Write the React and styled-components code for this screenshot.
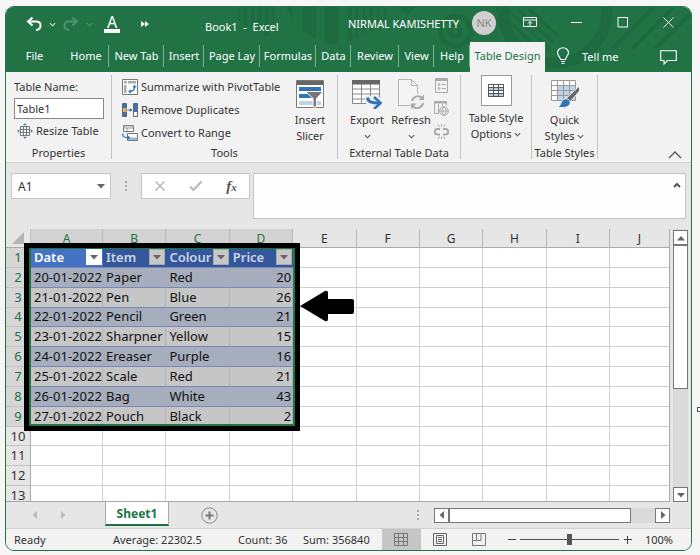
import React from 'react';
import styled, { createGlobalStyle } from 'styled-components';

const TABS = [
  { name: 'File', width: 57 },
  { name: 'Home', width: 46, line: true, pad: 2 },
  { name: 'New Tab', width: 55, line: true },
  { name: 'Insert', width: 40, line: true },
  { name: 'Page Lay', width: 56, line: true },
  { name: 'Formulas', width: 56, line: true },
  { name: 'Data', width: 35, line: true },
  { name: 'Review', width: 48, line: true },
  { name: 'View', width: 35, line: true },
  { name: 'Help', width: 36, line: true },
  { name: 'Table Design', width: 75, active: true },
];

const COLUMNS = ['A', 'B', 'C', 'D', 'E', 'F', 'G', 'H', 'I', 'J'];
const FIELDS = ['Date', 'Item', 'Colour', 'Price'];
const RECORDS = [
  ['20-01-2022', 'Paper', 'Red', 20],
  ['21-01-2022', 'Pen', 'Blue', 26],
  ['22-01-2022', 'Pencil', 'Green', 21],
  ['23-01-2022', 'Sharpner', 'Yellow', 15],
  ['24-01-2022', 'Ereaser', 'Purple', 16],
  ['25-01-2022', 'Scale', 'Red', 21],
  ['26-01-2022', 'Bag', 'White', 43],
  ['27-01-2022', 'Pouch', 'Black', 2],
];
const BLANK_ROWS = [10, 11, 12, 13];

/* ---------- icons ---------- */

const Chevron = ({ up, color = '#555', size = 7, weight = 1.3 }) => (
  <svg width={size} height={size} viewBox="0 0 8 8" fill="none" stroke={color} strokeWidth={weight}>
    <path d={up ? 'M1 6 4 3l3 3' : 'M1 2.5l3 3 3-3'} />
  </svg>
);

const Triangle = ({ dir = 'down', color = '#666', size = 8 }) => {
  const shapes = {
    down: '0,2 8,2 4,6.5',
    up: '0,6.5 8,6.5 4,2',
    left: '6,0 6,8 1.5,4',
    right: '2,0 2,8 6.5,4',
  };
  return (
    <svg width={size} height={size} viewBox="0 0 8 8">
      <polygon points={shapes[dir]} fill={color} />
    </svg>
  );
};

const UndoIcon = ({ color, flip }) => (
  <svg width="16" height="16" viewBox="0 0 16 16" fill="none" stroke={color} strokeWidth="2">
    <g transform={flip ? 'translate(16 0) scale(-1 1)' : undefined}>
      <path d="M6.5 1.5 2 5.5l4.5 4" />
      <path d="M2 5.5h8c3 0 4.5 1.7 4.5 4s-1.500 4.200-4.500 4.500" />
    </g>
  </svg>
);

const TitleArt = () => (
  <Art viewBox="0 0 686 66" preserveAspectRatio="xMinYMin slice" aria-hidden="true">
    <g fill="#1f6b41">
      <path d="M232 0h3v14h-3zM238 0h3v20h-3zM245 0h4v17h-4zM252 0h4v25h-4zM259 0h4v29h-4zM266 0h3v19h-3z" />
      <path d="M280 0h7v12zM297 0h14v32l-14-8zM319 0h14v37h-14z" />
      <path d="M343 0h3v34h-3zM350 0h3v31h-3zM357 0h3v26h-3zM364 0h3v24h-3zM371 0h3v18h-3zM378 0h3v12h-3z" />
      <path d="M393 0h18l-9 8z" />
    </g>
    <g fill="none" stroke="#1f6b41">
      <circle cx="450" cy="24" r="15" strokeWidth="5" />
      <circle cx="450" cy="24" r="5" strokeWidth="5" />
      <circle cx="550" cy="4" r="52" strokeWidth="11" />
      <path strokeWidth="3" d="M480 2l52 50M491 2l47 45M502 2l42 40M513 2l35 34M524 2l30 28" />
      <path strokeWidth="4" d="M649 0l-42 42M669 0l-42 42M686 6l-36 36" />
    </g>
  </Art>
);

const RibbonDisplayIcon = () => (
  <svg width="14" height="12" viewBox="0 0 14 12" fill="none" stroke="#fff">
    <path d="M.5 1.500h13v9H.5zM.5 4h13M7 10V5.500M5 7.500l2-2 2 2" />
  </svg>
);
const MinimizeIcon = () => (
  <svg width="11" height="11" stroke="#fff"><path d="M0 5.500h11" /></svg>
);
const MaximizeIcon = () => (
  <svg width="11" height="11" fill="none" stroke="#fff"><path d="M1 .5h9.500v9.500H1z" /></svg>
);
const CloseIcon = () => (
  <svg width="11" height="11" stroke="#fff"><path d="M.5.5l10 10M10.500.5l-10 10" /></svg>
);

const BulbIcon = () => (
  <svg width="14" height="18" viewBox="0 0 14 18" fill="none" stroke="#fff" strokeWidth="1.1">
    <path d="M4.500 12.500C4.500 10 1.500 9 1.500 5.800a5.500 5 0 0 1 11 0c0 3.200-3 4.200-3 6.700zM5 14.500h4M5.500 16.500h3" />
  </svg>
);
const CommentIcon = () => (
  <svg width="17" height="15" viewBox="0 0 17 15" fill="none" stroke="#fff" strokeWidth="1.1">
    <path d="M.7.7h15.600v9.800H7.500L4 14v-3.500H.7z" />
  </svg>
);

const ResizeIcon = () => (
  <svg width="16" height="16" viewBox="0 0 16 16" fill="none">
    <path d="M3.500 3.500h9v9h-9zM3.500 6.500h9M3.500 9.500h9M6.500 3.500v9M9.500 3.500v9" stroke="#777" />
    <path d="M8 0l2 2.300H6zM8 16l2-2.300H6zM0 8l2.300-2v4zM16 8l-2.300-2v4z" fill="#4a86c0" />
  </svg>
);
const PivotIcon = () => (
  <svg width="16" height="16" viewBox="0 0 16 16" fill="none">
    <path d="M.5.5h15v15H.5z" stroke="#777" fill="#fff" />
    <path d="M2 2h3v2.500H2zM6 2h8v2.500H6zM2 6h2.500v8H2z" fill="#aaa" />
    <path d="M7.500 12.500c3.500 0 5-1.500 5-5" stroke="#2f75b5" strokeWidth="1.300" />
    <path d="M12.500 5.500l2 3h-4zM6 12.500l3-2v4z" fill="#2f75b5" />
  </svg>
);
const DuplicatesIcon = () => (
  <svg width="16" height="16" viewBox="0 0 16 16" fill="none">
    <path d="M.5 1.500h4v13h-4zM11.500 1.500h4v13h-4z" fill="#fff" stroke="#666" />
    <path d="M1 2h3.500v4H1zM12 2h3.500v4H12z" fill="#2f75b5" />
    <path d="M1 6h3.500v4H1z" fill="#e0b060" />
    <path d="M1 10h3.500v4H1zM12 6h3.500v4H12z" fill="#4a6f9f" />
    <path d="M5.500 8h3" stroke="#2f75b5" />
    <path d="M8 6l2.500 2L8 10z" fill="#2f75b5" />
  </svg>
);
const ConvertIcon = () => (
  <svg width="16" height="16" viewBox="0 0 16 16" fill="none">
    <path d="M1.500.5h10v6h-10z" stroke="#777" fill="#fff" />
    <path d="M2 1h9v2H2zM5 3v3" stroke="#999" />
    <path d="M5.500 8.500h10v7h-10z" stroke="#777" fill="#fff" />
    <path d="M6 12.500h9v2.500H6z" fill="#9cb8d8" />
    <path d="M1 8.500c-.8 3 .5 4 4.500 4" stroke="#2f75b5" strokeWidth="1.200" />
    <path d="M5 10l3.500 2.500L5 15z" fill="#2f75b5" />
  </svg>
);
const SlicerIcon = () => (
  <svg width="28" height="28" viewBox="0 0 28 28">
    <path d="M.5.5h27v27H.5z" fill="#fff" stroke="#777" />
    <path d="M1 1h26v4H1z" fill="#666" />
    <path d="M3 7h22v4H3z" fill="#2f75b5" />
    <path d="M3 14h13v4H3z" fill="#2f75b5" />
    <path d="M3 21h22v4H3z" fill="#bdd3ea" />
    <path d="M9.500 11.500H27l-6.500 7V27h-3.500v-8.500z" fill="#777" stroke="#fff" />
  </svg>
);
const ExportIcon = () => (
  <svg width="30" height="30" viewBox="0 0 30 30" fill="none">
    <path d="M.5 1.500h27v23H.5z" fill="#fff" />
    <path d="M.5 1.500h27v23H.5zM.5 10h27M.5 15h27M.5 20h27M9.500 5v19M18.500 5v19" stroke="#888" />
    <path d="M0 1h28v4.500H0z" fill="#666" />
    <path d="M13 17h7l2-2 8 5v10H19c-4-2-6-6-6-13z" fill="#f2f2f2" />
    <path d="M15.500 18.500c.5 4.500 4 5.500 12 5.500" stroke="#2f75b5" strokeWidth="3" />
    <path d="M22 18l6.500 6-6.500 6" stroke="#2f75b5" strokeWidth="2.600" />
  </svg>
);
const RefreshIcon = () => (
  <svg width="28" height="30" viewBox="0 0 28 30" fill="none">
    <path d="M1.500.5h13l6 6v20h-19zM14.500.5v6h6" stroke="#b5b5b5" fill="#f5f5f5" />
    <circle cx="20.500" cy="23" r="8" fill="#f2f2f2" />
    <path d="M15 22a6 6 0 0 1 10-3M26 24a6 6 0 0 1-10 3.500" stroke="#aaa" strokeWidth="2" />
    <path d="M27 15.500v5.500h-5.500zM14 30v-5.500h5.500z" fill="#aaa" />
  </svg>
);
const PropertiesIcon = () => (
  <svg width="15" height="15" viewBox="0 0 15 15" fill="none" stroke="#aaa">
    <path d="M1.500.5h12v14h-12zM8 6.500h4M8 10.500h4" />
    <path d="M1 2h13" strokeWidth="2" />
    <circle cx="5" cy="6.500" r="1" />
    <circle cx="5" cy="10.500" r="1" />
  </svg>
);
const BrowserIcon = () => (
  <svg width="15" height="15" viewBox="0 0 15 15" fill="none" stroke="#aaa">
    <path d="M5 12.500H.5V.5h12v4M4.500 3v9M8.500 3v2" />
    <path d="M0 1.500h13" strokeWidth="2" />
    <circle cx="10" cy="10" r="4.300" />
    <path d="M5.700 10h8.600M10 5.700c-2.500 3-2.500 5.600 0 8.600M10 5.700c2.500 3 2.500 5.600 0 8.600" />
  </svg>
);
const UnlinkIcon = () => (
  <svg width="15" height="15" viewBox="0 0 15 15" fill="none" stroke="#aaa">
    <path d="M6 5H3.500a2.500 2.500 0 0 0 0 5.500H6M9 5h2.500a2.500 2.500 0 0 1 0 5.500H9" strokeWidth="2" />
    <path d="M4 .5l1.500 2.500M7.500 0v2.500M11 .5L9.500 3M4 15l1.500-2.500M7.500 15v-2.500M11 15l-1.500-2.500" />
  </svg>
);
const OptionsIcon = () => (
  <svg width="16" height="13" viewBox="0 0 16 13" fill="none">
    <path d="M.5.5h15v12H.5z" fill="#fff" />
    <path d="M1 3.500h14v3H1zM1 9.500h14v3H1z" fill="#b8cde6" />
    <path d="M.5.5h15v12H.5zM.5 3.500h15M.5 6.500h15M.5 9.500h15M5.500.5v12M10.500.5v12" stroke="#555" />
  </svg>
);
const QuickStylesIcon = () => (
  <svg width="30" height="30" viewBox="0 0 30 30" fill="none">
    <path d="M1.500 1.500h24v20h-24z" fill="#fff" />
    <path d="M7.500 6.500h18v15h-18z" fill="#bdd3ea" />
    <path d="M1.500 1.500h24v20h-24zM1.500 6.500h24M1.500 11.500h24M1.500 16.500h24M7.500 1.500v20M13.500 1.500v20M19.500 1.500v20" stroke="#999" />
    <path d="M29.500 7v5L20 23l-4-3.500z" fill="#666" stroke="#f2f2f2" />
    <path d="M18.500 20.500c4 3 .5 8-5 8H7.500c3.500-1.500 3-6 6-8 1.500-1 3.500-1 5 0z" fill="#2f75b5" stroke="#f2f2f2" />
  </svg>
);

const CancelIcon = () => (
  <svg width="12" height="12" stroke="#b8b8b8" strokeWidth="1.500"><path d="M1.500 1.500l9 9M10.500 1.500l-9 9" /></svg>
);
const CheckIcon = () => (
  <svg width="14" height="12" fill="none" stroke="#b8b8b8" strokeWidth="2"><path d="M1 6.500l3.500 3.500L12.500 1.500" /></svg>
);
const Dots = () => (
  <svg width="3" height="10" fill="#aaa"><path d="M0 0h2v2H0zM0 4h2v2H0zM0 8h2v2H0z" /></svg>
);
const AddIcon = () => (
  <svg width="17" height="17" viewBox="0 0 17 17" fill="none" stroke="#888">
    <circle cx="8.500" cy="8.500" r="7.700" />
    <path d="M8.500 4.500v8M4.500 8.500h8" strokeWidth="2" stroke="#777" />
  </svg>
);
const NormalViewIcon = () => (
  <svg width="14" height="13" fill="none" stroke="#777"><path d="M.5.5h13v12H.5zM.5 4.500h13M.5 8.500h13M4.500.5v12M9.500.5v12" /></svg>
);
const PageLayoutIcon = () => (
  <svg width="14" height="13" fill="none" stroke="#666"><path d="M.5.5h13v12H.5zM3.500 2.500h7v8h-7zM5 4.500h4M5 6.500h4M5 8.500h4" /></svg>
);
const PageBreakIcon = () => (
  <svg width="14" height="13" fill="none" stroke="#777"><path d="M.5.5h13v12H.5zM4.500.5v7M.5 7.500h8.500V.5" /></svg>
);

/* ---------- page ---------- */

function TitleBar() {
  return (
    <TitleWrapper>
      <QuickAccess>
        <IconButton aria-label="Undo" $w={16}><UndoIcon color="#fff" /></IconButton>
        <IconButton aria-label="Undo history" $w={7}><Chevron color="#cfe3d7" /></IconButton>
        <IconButton aria-label="Redo" $w={16}><UndoIcon color="#4f9270" flip /></IconButton>
        <IconButton aria-label="Redo history" $w={7}><Chevron color="#4f9270" /></IconButton>
        <FontColor aria-label="Font color">A</FontColor>
        <IconButton aria-label="More commands" $w={8}>
          <svg width="8" height="6" fill="#fff"><path d="M0 0l4 3-4 3zM4 0l4 3-4 3z" /></svg>
        </IconButton>
      </QuickAccess>
      <BookName>Book1&nbsp; -&nbsp; Excel</BookName>
      <User>
        <span>NIRMAL KAMISHETTY</span>
        <Avatar>NK</Avatar>
      </User>
      <WindowButtons>
        <IconButton aria-label="Ribbon display options" $w={46}><RibbonDisplayIcon /></IconButton>
        <IconButton aria-label="Minimize" $w={46}><MinimizeIcon /></IconButton>
        <IconButton aria-label="Maximize" $w={46}><MaximizeIcon /></IconButton>
        <IconButton aria-label="Close" $w={46}><CloseIcon /></IconButton>
      </WindowButtons>
    </TitleWrapper>
  );
}

function Ribbon() {
  return (
    <RibbonWrapper>
      <Group $w={106}>
        <Stack $pad={8}>
          <FieldLabel htmlFor="table-name">Table Name:</FieldLabel>
          <NameInput id="table-name" defaultValue="Table1" />
          <RowButton $inset={3}><ResizeIcon />Resize Table</RowButton>
        </Stack>
        <GroupName>Properties</GroupName>
      </Group>
      <Group $w={226}>
        <Parts>
          <Stack $pad={10}>
            <RowButton><PivotIcon />Summarize with PivotTable</RowButton>
            <RowButton><DuplicatesIcon />Remove Duplicates</RowButton>
            <RowButton><ConvertIcon />Convert to Range</RowButton>
          </Stack>
          <BigButton $w={54}>
            <IconSlot><SlicerIcon /></IconSlot>
            <span>Insert</span>
            <span>Slicer</span>
          </BigButton>
        </Parts>
        <GroupName>Tools</GroupName>
      </Group>
      <Group $w={123}>
        <Parts>
          <BigButton $w={58}>
            <IconSlot><ExportIcon /></IconSlot>
            <span>Export</span>
            <span><Chevron /></span>
          </BigButton>
          <BigButton $w={30}>
            <IconSlot><RefreshIcon /></IconSlot>
            <span>Refresh</span>
            <span><Chevron /></span>
          </BigButton>
          <SmallIcons>
            <IconButton aria-label="Properties" $w={16}><PropertiesIcon /></IconButton>
            <IconButton aria-label="Open in browser" $w={16}><BrowserIcon /></IconButton>
            <IconButton aria-label="Unlink" $w={16}><UnlinkIcon /></IconButton>
          </SmallIcons>
        </Parts>
        <GroupName>External Table Data</GroupName>
      </Group>
      <Group $w={71}>
        <Parts>
          <BigButton $w={70}>
            <OptionsBox><OptionsIcon /></OptionsBox>
            <span>Table Style</span>
            <span>Options <Chevron /></span>
          </BigButton>
        </Parts>
      </Group>
      <Group $w={66}>
        <Parts>
          <BigButton $w={65}>
            <IconSlot><QuickStylesIcon /></IconSlot>
            <span>Quick</span>
            <span>Styles <Chevron /></span>
          </BigButton>
        </Parts>
        <GroupName>Table Styles</GroupName>
      </Group>
      <Collapse aria-label="Collapse the ribbon">
        <svg width="14" height="8" fill="none" stroke="#555" strokeWidth="1.300"><path d="M1 7l6-6 6 6" /></svg>
      </Collapse>
    </RibbonWrapper>
  );
}

function FormulaBar() {
  return (
    <FormulaWrapper>
      <NameBox>
        <input aria-label="Name box" defaultValue="A1" />
        <IconButton aria-label="Show names" $w={18}><Triangle /></IconButton>
      </NameBox>
      <DotsSlot><Dots /></DotsSlot>
      <FormulaButtons>
        <IconButton aria-label="Cancel" $w={36}><CancelIcon /></IconButton>
        <IconButton aria-label="Enter" $w={36}><CheckIcon /></IconButton>
        <FxButton aria-label="Insert function">f<small>x</small></FxButton>
      </FormulaButtons>
      <FormulaField>
        <textarea aria-label="Formula bar" />
        <IconButton aria-label="Collapse formula bar" $w={16}><Chevron up size={8} weight={2} /></IconButton>
      </FormulaField>
    </FormulaWrapper>
  );
}

function Sheet() {
  const blanks = COLUMNS.slice(FIELDS.length);
  return (
    <SheetWrapper>
      <GridArea>
        <Grid>
          <colgroup>
            <Col $name="rows" />
            {COLUMNS.map((c) => <Col key={c} $name={c} />)}
          </colgroup>
          <thead>
            <tr>
              <Corner><svg width="12" height="12" fill="#b4b4b4"><path d="M12 0v12H0z" /></svg></Corner>
              {COLUMNS.map((c, i) => <ColHead key={c} scope="col" $on={i < FIELDS.length}>{c}</ColHead>)}
            </tr>
          </thead>
          <tbody>
            <tr>
              <RowHead scope="row" $on>1</RowHead>
              {FIELDS.map((f, i) => (
                <FieldCell key={f} $active={i === 0}>
                  <div>
                    {f}
                    <FilterButton aria-label={`Filter ${f}`} $active={i === 0}><Triangle /></FilterButton>
                  </div>
                </FieldCell>
              ))}
              {blanks.map((c) => <Cell key={c} />)}
            </tr>
            {RECORDS.map((r, i) => (
              <tr key={r[0]}>
                <RowHead scope="row" $on>{i + 2}</RowHead>
                {r.map((v, j) => (
                  <DataCell key={j} $band={i % 2 === 0} $right={j === 0 || j === 3}>{v}</DataCell>
                ))}
                {blanks.map((c) => <Cell key={c} />)}
              </tr>
            ))}
            {BLANK_ROWS.map((n) => (
              <tr key={n}>
                <RowHead scope="row">{n}</RowHead>
                {COLUMNS.map((c) => <Cell key={c} />)}
              </tr>
            ))}
          </tbody>
        </Grid>
      </GridArea>
      <VScroll>
        <ScrollButton aria-label="Scroll up"><Triangle dir="up" /></ScrollButton>
        <VThumb />
        <ScrollButton aria-label="Scroll down"><Triangle /></ScrollButton>
      </VScroll>
      <Highlight><span /></Highlight>
      <Arrow viewBox="0 0 56 32" aria-hidden="true">
        <path d="M1 16 26 1q3-1 3 2v6h24q2 0 2 2v11q0 2-2 2H29v5q0 3-3 2z" />
      </Arrow>
    </SheetWrapper>
  );
}

function SheetBar() {
  return (
    <SheetBarWrapper>
      <SheetNav>
        <IconButton aria-label="Previous sheet" $w={8}><Triangle dir="left" color="#bbb" /></IconButton>
        <IconButton aria-label="Next sheet" $w={8}><Triangle dir="right" color="#bbb" /></IconButton>
      </SheetNav>
      <SheetTab>Sheet1</SheetTab>
      <AddSheet aria-label="New sheet"><AddIcon /></AddSheet>
      <Dots />
      <HScroll>
        <ScrollButton aria-label="Scroll left"><Triangle dir="left" /></ScrollButton>
        <HThumb />
        <ScrollButton aria-label="Scroll right"><Triangle dir="right" /></ScrollButton>
      </HScroll>
    </SheetBarWrapper>
  );
}

function StatusBar() {
  return (
    <StatusWrapper>
      <Stat $w={99}>Ready</Stat>
      <Stat $w={125}>Average: 22302.5</Stat>
      <Stat $w={65}>Count: 36</Stat>
      <Stat>Sum: 356840</Stat>
      <Views>
        <ViewButton aria-label="Normal" $on><NormalViewIcon /></ViewButton>
        <ViewButton aria-label="Page layout"><PageLayoutIcon /></ViewButton>
        <ViewButton aria-label="Page break preview"><PageBreakIcon /></ViewButton>
      </Views>
      <Zoom>
        <IconButton aria-label="Zoom out" $w={9}><svg width="9" height="9" stroke="#444"><path d="M1 4.500h8" /></svg></IconButton>
        <input type="range" aria-label="Zoom" min="0" max="200" defaultValue="101" />
        <IconButton aria-label="Zoom in" $w={9}><svg width="9" height="9" stroke="#444"><path d="M1 4.500h8M4.500 1v8" /></svg></IconButton>
      </Zoom>
      <span>100%</span>
    </StatusWrapper>
  );
}

function App() {
  return (
    <Page>
      <GlobalStyle />
      <Window>
        <Header>
          <TitleArt />
          <TitleBar />
          <TabBar>
            {TABS.map((t) => (
              <Tab key={t.name} $w={t.width} $line={t.line} $active={t.active}>{t.name}</Tab>
            ))}
            <TellMe><BulbIcon />Tell me</TellMe>
            <IconButton aria-label="Comments" $w={46}><CommentIcon /></IconButton>
          </TabBar>
        </Header>
        <Ribbon />
        <FormulaBar />
        <Sheet />
        <SheetBar />
        <StatusBar />
      </Window>
      <EdgeHandle />
    </Page>
  );
}

const GlobalStyle = createGlobalStyle`
  * {
    box-sizing: border-box;
  }
  body {
    margin: 0;
    background: #f6f6f6;
    font-family: "Noto Sans", "Open Sans", sans-serif;
    font-size: 11px;
    color: #333;
  }
  button, input, textarea {
    font: inherit;
    color: inherit;
    margin: 0;
    padding: 0;
    border: 0;
    background: none;
  }
  svg {
    flex: none;
  }
`;

const Page = styled.div`
  position: relative;
  display: flex;
  height: 100vh;
  min-height: 480px;
  padding: 6px 8px 4px 5px;
  overflow: hidden;
`;

const Window = styled.main`
  flex: 1;
  min-width: 0;
  display: flex;
  flex-direction: column;
  border: 1px solid #217346;
  border-radius: 9px;
  background: #e6e6e6;
  overflow: hidden;
`;

const EdgeHandle = styled.i`
  position: absolute;
  right: -2px;
  top: 407px;
  width: 5px;
  height: 5px;
  border: 1px solid #555;
  background: #fff;
`;

const IconButton = styled.button`
  display: flex;
  flex: none;
  align-items: center;
  justify-content: center;
  width: ${(p) => p.$w}px;
`;

const Header = styled.header`
  position: relative;
  background: #217346;
  color: #fff;
`;

const Art = styled.svg`
  position: absolute;
  inset: 0;
  width: 100%;
  height: 100%;
`;

const TitleWrapper = styled.div`
  position: relative;
  display: flex;
  align-items: center;
  height: 34px;
`;

const QuickAccess = styled.div`
  display: flex;
  align-items: center;
  gap: 7px;
  padding-left: 20px;
  width: 199px;
`;

const FontColor = styled.button`
  width: 16px;
  margin: 0 14px 0 4px;
  border-bottom: 4px solid #fff;
  font-size: 16px;
  line-height: 14px;
`;

const BookName = styled.h1`
  margin: 4px 0 0;
  width: 143px;
  font-size: 11px;
  font-weight: 400;
  white-space: nowrap;
`;

const User = styled.div`
  display: flex;
  align-items: center;
  gap: 13px;
  margin-top: -2px;
  white-space: nowrap;
`;

const Avatar = styled.span`
  width: 24px;
  height: 24px;
  border-radius: 50%;
  background: #d0d0d0;
  color: #888;
  line-height: 24px;
  text-align: center;
`;

const WindowButtons = styled.div`
  display: flex;
  margin: -4px 0 0 auto;
`;

const TabBar = styled.nav`
  position: relative;
  display: flex;
  height: 31px;
  padding-top: 1px;
`;

const Tab = styled.button`
  flex: none;
  width: ${(p) => p.$w}px;
  line-height: 28px;
  padding-bottom: 2px;
  white-space: nowrap;
  overflow: hidden;
  background: ${(p) => (p.$active ? '#f2f2f2' : 'none')};
  color: ${(p) => (p.$active ? '#217346' : '#fff')};
  ${(p) => p.$line && `
    background: linear-gradient(#7fb094, #7fb094) right 3px / 1px 22px no-repeat;
  `}
`;

const TellMe = styled.button`
  display: flex;
  flex: 1;
  align-items: center;
  gap: 12px;
  padding: 0 0 2px 11px;
  white-space: nowrap;
`;

const RibbonWrapper = styled.section`
  display: flex;
  height: 91px;
  padding: 3px 0;
  background: #f2f2f2;
  border-bottom: 1px solid #d2d2d2;
`;

const Group = styled.div`
  display: flex;
  flex: none;
  flex-direction: column;
  justify-content: space-between;
  width: ${(p) => p.$w}px;
  border-right: 1px solid #c4c4c4;
`;

const Parts = styled.div`
  display: flex;
`;

const Stack = styled.div`
  display: flex;
  flex: 1;
  flex-direction: column;
  align-items: flex-start;
  padding-left: ${(p) => p.$pad}px;
`;

const FieldLabel = styled.label`
  line-height: 23px;
`;

const NameInput = styled.input`
  width: 90px;
  height: 21px;
  padding: 0 2px;
  border: 1px solid #888;
  background: #fff;
`;

const RowButton = styled.button`
  display: flex;
  align-items: center;
  gap: 3px;
  height: 23px;
  padding-left: ${(p) => p.$inset || 0}px;
  white-space: nowrap;
`;

const BigButton = styled.button`
  display: flex;
  flex: none;
  flex-direction: column;
  align-items: center;
  width: ${(p) => p.$w}px;
  line-height: 16px;
  white-space: nowrap;

  span {
    min-height: 16px;
  }
`;

const IconSlot = styled.i`
  display: flex;
  align-items: center;
  justify-content: center;
  height: 37px;
`;

const OptionsBox = styled.i`
  display: flex;
  align-items: center;
  justify-content: center;
  width: 31px;
  height: 31px;
  margin-bottom: 4px;
  border: 1px solid #999;
  background: #fff;
`;

const SmallIcons = styled.div`
  display: flex;
  flex-direction: column;
  justify-content: space-between;
  padding: 3px 0 5px 7px;
`;

const GroupName = styled.div`
  line-height: 12px;
  text-align: center;
  white-space: nowrap;
`;

const Collapse = styled.button`
  align-self: flex-end;
  margin: 0 9px 0 auto;
  line-height: 0;
`;

const FormulaWrapper = styled.section`
  display: flex;
  align-items: flex-start;
  padding: 10px 5px;
`;

const NameBox = styled.div`
  display: flex;
  width: 100px;
  height: 26px;
  border: 1px solid #c6c6c6;
  background: #fff;

  input {
    flex: 1;
    min-width: 0;
    padding-left: 6px;
    font-size: 12px;
  }
`;

const DotsSlot = styled.div`
  display: flex;
  align-items: center;
  justify-content: center;
  width: 30px;
  height: 26px;
`;

const FormulaButtons = styled.div`
  display: flex;
  width: 109px;
  height: 26px;
  border: 1px solid #c6c6c6;
  background: #fff;
`;

const FxButton = styled.button`
  width: 36px;
  color: #555;
  font-family: "Liberation Serif", serif;
  font-size: 15px;
  font-style: italic;
  font-weight: 700;
  line-height: 20px;

  small {
    font-size: 11px;
  }
`;

const FormulaField = styled.div`
  display: flex;
  flex: 1;
  align-items: flex-start;
  height: 46px;
  margin-left: 3px;
  padding-top: 7px;
  border: 1px solid #c6c6c6;
  background: #fdfdfd;

  textarea {
    flex: 1;
    min-width: 0;
    height: 30px;
    resize: none;
  }
`;

const SheetWrapper = styled.section`
  position: relative;
  display: flex;
  flex: 1;
  gap: 3px;
  min-height: 0;
  padding-right: 3px;
`;

const GridArea = styled.div`
  flex: 1;
  min-width: 0;
  overflow: hidden;
  border-right: 1px solid #aaa;
  border-bottom: 1px solid #aaa;
`;

const Grid = styled.table`
  width: 100%;
  height: 277px;
  table-layout: fixed;
  border-collapse: separate;
  border-spacing: 0;
  font-size: 13px;
  line-height: 17px;

  th, td {
    padding: 0;
    font-weight: 400;
    white-space: nowrap;
  }
`;

const Col = styled.col`
  width: ${(p) => ({ rows: '25px', A: '72px', J: '59px' }[p.$name] || 'auto')};
`;

const Corner = styled.td`
  height: 19px;
  border-bottom: 1px solid #aaa;
  border-right: 1px solid #c4c4c4;
  text-align: center;
  line-height: 0;

  svg {
    vertical-align: bottom;
  }
`;

const ColHead = styled.th`
  height: 19px;
  background: ${(p) => (p.$on ? '#d2d2d2' : '#e6e6e6')};
  color: ${(p) => (p.$on ? '#217346' : '#333')};
  border-right: 1px solid #b8b8b8;
  border-bottom: 1px solid #aaa;
  font-size: 12px;

  &:last-child {
    border-right: 0;
  }
`;

const RowHead = styled.th`
  background: ${(p) => (p.$on ? '#d6d6d6' : '#e6e6e6')};
  color: ${(p) => (p.$on ? '#217346' : '#333')};
  border-right: 1px solid #aaa;
  border-bottom: 1px solid #c4c4c4;
`;

const Cell = styled.td`
  background: #fff;
  border-right: 1px solid #d0d0d0;
  border-bottom: 1px solid #d0d0d0;

  &:last-child {
    border-right: 0;
  }
`;

const FieldCell = styled.td`
  background: ${(p) => (p.$active ? '#4472c4' : '#34579b')};
  color: ${(p) => (p.$active ? '#fff' : '#cdd5e4')};
  border-bottom: 1px solid #7688b8;

  div {
    display: flex;
    align-items: center;
    justify-content: space-between;
    padding: 0 1px 0 3px;
    font-weight: 600;
  }
`;

const FilterButton = styled.button`
  display: flex;
  align-items: center;
  justify-content: center;
  width: 16px;
  height: 16px;
  border: 1px solid ${(p) => (p.$active ? '#fff' : '#aaa')};
  background: ${(p) => (p.$active ? '#fff' : '#c8c8c8')};
`;

const DataCell = styled.td`
  && {
    padding: 0 1px 0 3px;
  }
  background: ${(p) => (p.$band ? '#a6adbc' : '#c6c6c6')};
  color: #111;
  border-right: 1px solid ${(p) => (p.$band ? '#a6adbc' : '#b0b0b0')};
  border-bottom: 1px solid #7688b8;
  text-align: ${(p) => (p.$right ? 'right' : 'left')};
`;

/* frame drawn over the selected range */
const Highlight = styled.div`
  position: absolute;
  left: 18px;
  top: 14px;
  width: 276px;
  height: 188px;
  border: 5px solid #000;

  span {
    display: block;
    height: 100%;
    border: 2px solid #217346;
    border-top-width: 1px;
  }
`;

const Arrow = styled.svg`
  position: absolute;
  left: 293px;
  top: 61px;
  width: 56px;
  height: 32px;
`;

const VScroll = styled.div`
  display: flex;
  flex-direction: column;
  width: 15px;
  padding-top: 1px;
  background: #dadada;
`;

const ScrollButton = styled.button`
  display: flex;
  flex: none;
  align-items: center;
  justify-content: center;
  width: 15px;
  height: 15px;
  border: 1px solid #777;
  background: #fff;
`;

const VThumb = styled.div`
  height: 144px;
  margin-bottom: auto;
  border: 1px solid #777;
  background: #fff;
`;

const SheetBarWrapper = styled.section`
  display: flex;
  align-items: center;
  height: 26px;
  padding-right: 21px;
`;

const SheetNav = styled.div`
  display: flex;
  gap: 20px;
  width: 99px;
  padding-left: 25px;
`;

const SheetTab = styled.button`
  align-self: flex-start;
  width: 64px;
  height: 24px;
  background: #fff;
  border: solid #aaa;
  border-width: 0 1px;
  border-bottom: 2px solid #217346;
  color: #217346;
  font-size: 12px;
  font-weight: 700;
`;

const AddSheet = styled.button`
  margin: 0 auto 0 32px;
  line-height: 0;
`;

const HScroll = styled.div`
  display: flex;
  justify-content: space-between;
  width: 236px;
  margin-left: 14px;
  background: #dadada;
`;

const HThumb = styled.div`
  width: 182px;
  margin-right: auto;
  border: 1px solid #777;
  background: #fff;
`;

const StatusWrapper = styled.footer`
  display: flex;
  align-items: center;
  height: 22px;
  padding: 0 18px 0 8px;
  background: #f2f2f2;
  border-top: 1px solid #d0d0d0;
  white-space: nowrap;
`;

const Stat = styled.span`
  flex: none;
  width: ${(p) => (p.$w ? `${p.$w}px` : 'auto')};
`;

const Views = styled.div`
  display: flex;
  align-self: stretch;
  margin-left: auto;
`;

const ViewButton = styled.button`
  display: flex;
  align-items: center;
  justify-content: center;
  width: 39px;
  background: ${(p) => (p.$on ? '#c6c6c6' : 'none')};
`;

const Zoom = styled.div`
  display: flex;
  align-items: center;
  gap: 4px;
  margin: 0 13px 0 8px;

  input {
    appearance: none;
    width: 99px;
    height: 13px;
    background: linear-gradient(#555, #555) center / 100% 1px no-repeat;
  }
  input::-webkit-slider-thumb {
    appearance: none;
    width: 5px;
    height: 11px;
    background: #555;
  }
`;

export default App;
